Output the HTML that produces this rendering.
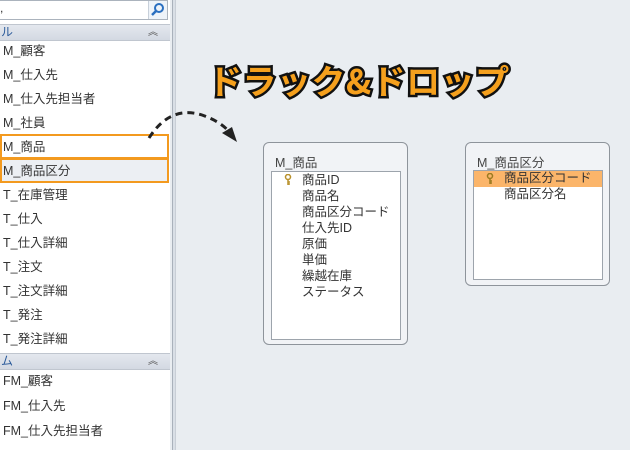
<!DOCTYPE html>
<html><head><meta charset="utf-8"><style>
*{margin:0;padding:0;box-sizing:border-box}
body{width:630px;height:450px;overflow:hidden;background:#e9edf1;font-family:"Liberation Sans","Noto Sans CJK JP",sans-serif;position:relative;color:#333}
#left{position:absolute;left:0;top:0;width:170px;height:450px;background:#fff}
.search{position:absolute;left:0;top:0;width:168px;height:20px;border:1px solid #abb3bd;border-left:none;background:#fff;font-size:12px}
.sbtn{position:absolute;right:0;top:0;width:19px;height:18px;border-left:1px solid #c8d0da;background:#eef3f9}
.hdr{position:absolute;left:0;width:170px;height:17px;background:linear-gradient(#e4e8ee,#d3d9e2);border-top:1px solid #c0c6cf;border-bottom:1px solid #c0c6cf;font-size:12px;color:#2a5a9a;padding-left:1px;line-height:15px}
.hdr span{position:absolute;right:12px;top:0;color:#555;font-size:10px}
.it{position:absolute;left:3px;font-size:12.5px;height:24px;line-height:24px;color:#333}
.sel{position:absolute;left:0;width:169px;height:25px;border:2px solid #f39a1f}
#div{position:absolute;left:172px;top:0;width:4px;height:450px;background:#d9dfe6;border-left:1px solid #a9b1bb;border-right:1px solid #c8ced6}
.tbl{position:absolute;background:#f1f3f6;border:1px solid #8e949b;border-radius:6px}
.tt{position:absolute;left:11px;top:9px;font-size:12.5px;color:#444}
.lst{position:absolute;background:#fff;border:1px solid #9da4ac}
.r{position:absolute;left:30px;font-size:12.5px;height:17px;line-height:17px;color:#333}
.key{position:absolute;left:12px}
.title{position:absolute;left:208px;top:55px;font-size:34px;font-weight:bold;color:#f5a01d;-webkit-text-stroke:5px #111;paint-order:stroke fill;letter-spacing:0.5px;white-space:nowrap;font-family:"Noto Sans CJK JP",sans-serif}
</style></head><body>
<div id="left">
<div class="search">,<div class="sbtn"><svg width="18" height="18" viewBox="0 0 18 18"><circle cx="10" cy="7" r="4" fill="none" stroke="#2a6fc0" stroke-width="2"/><path d="M7 10 L3 14" stroke="#2a6fc0" stroke-width="2.5"/></svg></div></div>
<div class="hdr" style="top:24px">ル<span>︽</span></div>
<div class="it" style="top:39px">M_顧客</div>
<div class="it" style="top:63px">M_仕入先</div>
<div class="it" style="top:87px">M_仕入先担当者</div>
<div class="it" style="top:111px">M_社員</div>
<div style="position:absolute;left:0;top:159px;width:168px;height:24px;background:#eceff3"></div>
<div class="sel" style="top:134px"></div>
<div class="sel" style="top:158px"></div>
<div class="it" style="top:135px">M_商品</div>
<div class="it" style="top:159px">M_商品区分</div>
<div class="it" style="top:183px">T_在庫管理</div>
<div class="it" style="top:207px">T_仕入</div>
<div class="it" style="top:231px">T_仕入詳細</div>
<div class="it" style="top:255px">T_注文</div>
<div class="it" style="top:279px">T_注文詳細</div>
<div class="it" style="top:303px">T_発注</div>
<div class="it" style="top:327px">T_発注詳細</div>
<div class="hdr" style="top:353px">ム<span>︽</span></div>
<div class="it" style="top:369px">FM_顧客</div>
<div class="it" style="top:394px">FM_仕入先</div>
<div class="it" style="top:419px">FM_仕入先担当者</div>
</div>
<div id="div"></div>
<div class="title">ドラック&amp;ドロップ</div>
<svg style="position:absolute;left:140px;top:105px" width="110" height="45"><path d="M9 33 Q30 0 62 10 Q82 17 90 28" fill="none" stroke="#222" stroke-width="3" stroke-dasharray="7,5"/><path d="M82 28 L97 37 L92 22 Z" fill="#222"/></svg>
<div class="tbl" style="left:263px;top:142px;width:145px;height:203px">
<div class="tt">M_商品</div>
<div class="lst" style="left:7px;top:28px;width:130px;height:169px">
<svg class="key" style="top:2px" width="8" height="12" viewBox="0 0 8 12"><circle cx="4" cy="3" r="2.5" fill="none" stroke="#b8902a" stroke-width="1.5"/><path d="M4 5.5V11M4 8h2M4 10h2" stroke="#b8902a" stroke-width="1.5"/></svg>
<div class="r" style="top:0">商品ID</div><div class="r" style="top:16px">商品名</div><div class="r" style="top:32px">商品区分コード</div><div class="r" style="top:48px">仕入先ID</div><div class="r" style="top:64px">原価</div><div class="r" style="top:80px">単価</div><div class="r" style="top:96px">繰越在庫</div><div class="r" style="top:112px">ステータス</div>
</div></div>
<div class="tbl" style="left:465px;top:142px;width:145px;height:144px">
<div class="tt">M_商品区分</div>
<div class="lst" style="left:7px;top:27px;width:130px;height:110px">
<div style="position:absolute;left:0;top:0;width:128px;height:16px;background:#fbb56a"></div>
<svg class="key" style="top:2px" width="8" height="12" viewBox="0 0 8 12"><circle cx="4" cy="3" r="2.5" fill="none" stroke="#9a7a20" stroke-width="1.5"/><path d="M4 5.5V11M4 8h2M4 10h2" stroke="#9a7a20" stroke-width="1.5"/></svg>
<div class="r" style="top:-1px">商品区分コード</div><div class="r" style="top:15px">商品区分名</div>
</div></div>
</body></html>
